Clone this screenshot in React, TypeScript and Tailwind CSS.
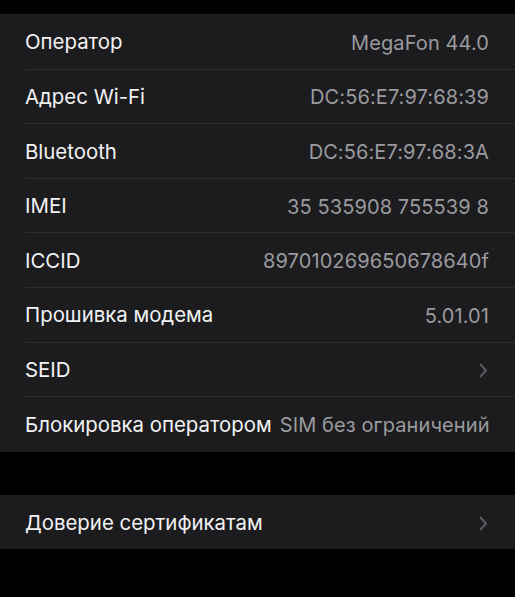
import React from "react";

const rows: { label: string; value?: string; chevron?: boolean }[] = [
  { label: "Оператор", value: "MegaFon 44.0" },
  { label: "Адрес Wi-Fi", value: "DC:56:E7:97:68:39" },
  { label: "Bluetooth", value: "DC:56:E7:97:68:3A" },
  { label: "IMEI", value: "35 535908 755539 8" },
  { label: "ICCID", value: "897010269650678640f" },
  { label: "Прошивка модема", value: "5.01.01" },
  { label: "SEID", chevron: true },
  { label: "Блокировка оператором", value: "SIM без ограничений" },
];

function Chevron() {
  return (
    <svg width="9" height="15" viewBox="0 0 9 15" className="mr-[1px]">
      <path d="M1.5 1.5 L7 7.5 L1.5 13.5" fill="none" stroke="#5b5b60" strokeWidth="2" strokeLinecap="round" strokeLinejoin="round" />
    </svg>
  );
}

function Row({ label, value, chevron, last }: { label: string; value?: string; chevron?: boolean; last?: boolean }) {
  return (
    <div className="pl-[25px]">
      <div className={`h-[54.6px] pt-[2px] flex items-center justify-between gap-2 pr-[26px] whitespace-nowrap ${last ? "" : "border-b border-[#2e2e31]"}`}>
        <span className="text-[20.4px] text-[#f2f2f4]">{label}</span>
        {value && <span className="text-[20px] text-[#9a9a9f] tracking-[0.1px]">{value}</span>}
        {chevron && <Chevron />}
      </div>
    </div>
  );
}

export default function App() {
  return (
    <div className="w-[515px] h-[597px] bg-black flex flex-col" style={{ fontFamily: "Inter, 'Noto Sans', sans-serif" }}>
      <div className="h-[15px] border-b border-[#1e1e20]" />
      <div className="bg-[#1c1c1e]">
        {rows.map((r, i) => (
          <Row key={r.label} {...r} last={i === rows.length - 1} />
        ))}
      </div>
      <div className="h-[43px]" />
      <div className="bg-[#1c1c1e]">
        <Row label="Доверие сертификатам" chevron last />
      </div>
    </div>
  );
}
